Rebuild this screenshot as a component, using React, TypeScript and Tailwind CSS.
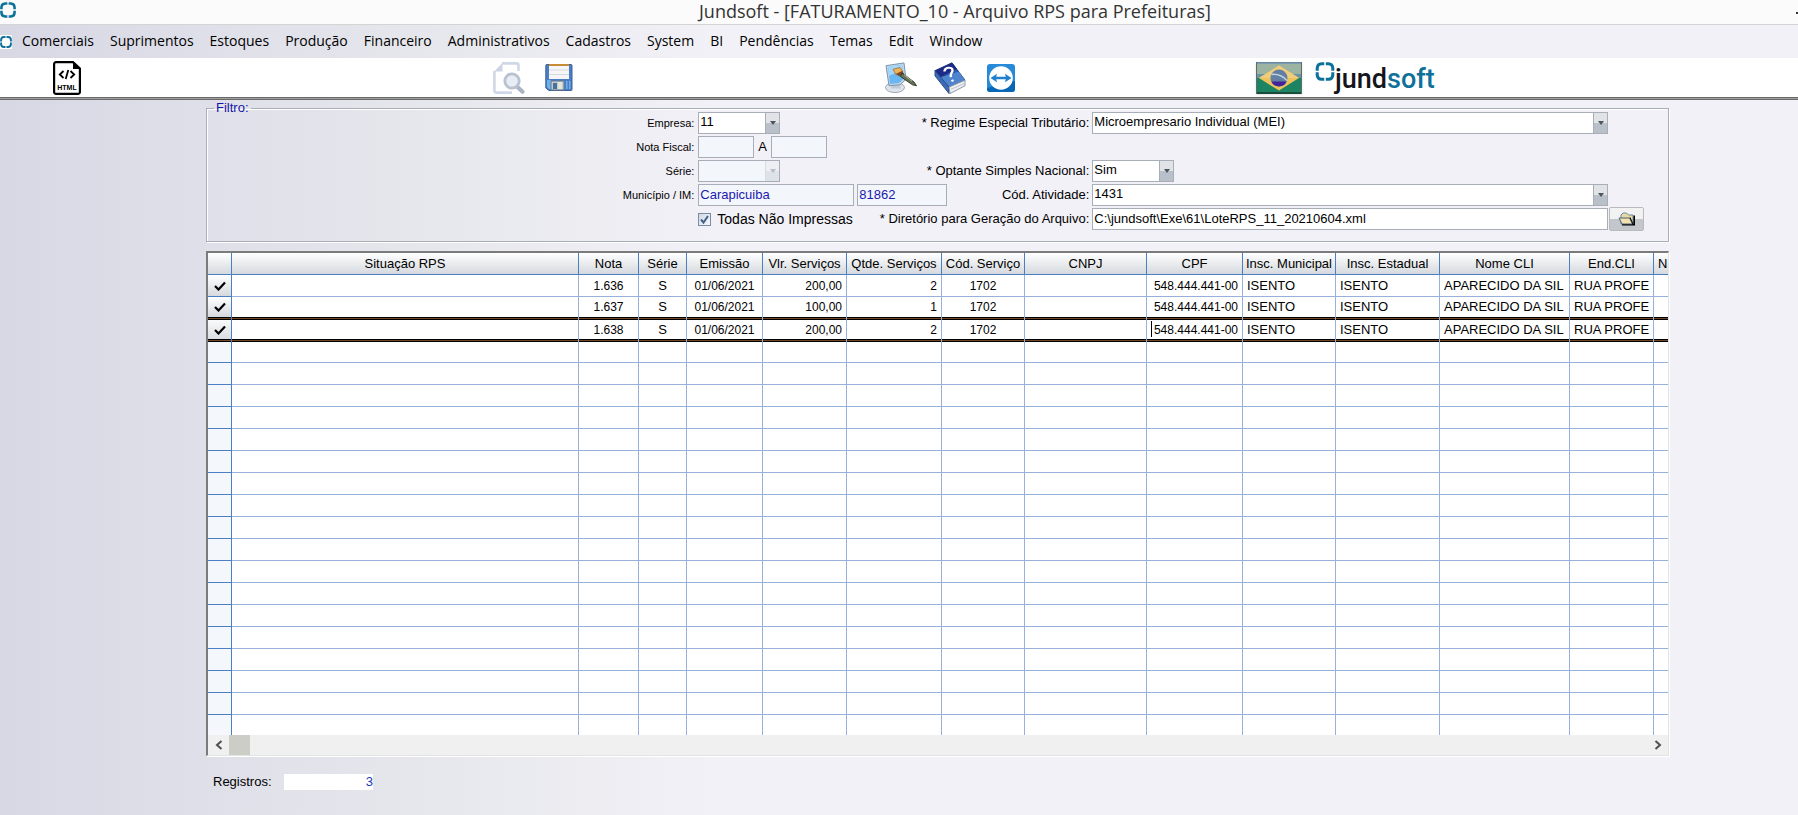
import React from 'react';

const menuItems = [
  'Comerciais', 'Suprimentos', 'Estoques', 'Produção', 'Financeiro', 'Administrativos',
  'Cadastros', 'System', 'BI', 'Pendências', 'Temas', 'Edit', 'Window',
];

interface Rps {
  nota: string;
  valor: string;
  qtde: string;
}

const registros: Rps[] = [
  { nota: '1.636', valor: '200,00', qtde: '2' },
  { nota: '1.637', valor: '100,00', qtde: '1' },
  { nota: '1.638', valor: '200,00', qtde: '2' },
];

const columns = [
  { title: '', width: 'w-[24px]' },
  { title: 'Situação RPS', width: '' },
  { title: 'Nota', width: 'w-[60px]' },
  { title: 'Série', width: 'w-[48px]' },
  { title: 'Emissão', width: 'w-[76px]' },
  { title: 'Vlr. Serviços', width: 'w-[84px]' },
  { title: 'Qtde. Serviços', width: 'w-[95px]' },
  { title: 'Cód. Serviço', width: 'w-[83px]' },
  { title: 'CNPJ', width: 'w-[122px]' },
  { title: 'CPF', width: 'w-[96px]' },
  { title: 'Insc. Municipal', width: 'w-[93px]' },
  { title: 'Insc. Estadual', width: 'w-[104px]' },
  { title: 'Nome CLI', width: 'w-[130px]' },
  { title: 'End.CLI', width: 'w-[84px]' },
  { title: 'N', width: 'w-[14px]' },
];

const emptyRows = Array.from({ length: 18 }, (_, i) => i);

const LogoMark: React.FC<{ className?: string }> = ({ className }) => (
  <svg viewBox="0 0 20 20" className={className} fill="none" stroke="#0d7199" strokeWidth="3.2" aria-hidden="true">
    <path d="M1.800 9.200V6.500Q2 2 6.500 1.800H9.200M10.800 1.800H13.500Q18 2 18.200 6.500V9.200M18.200 10.800V13.500Q18 18 13.500 18.200H10.800M9.200 18.200H6.500Q2 18 1.800 13.500V10.800" />
  </svg>
);

const HtmlIcon = () => (
  <svg viewBox="0 0 28 34" className="w-7 h-[34px]" aria-hidden="true">
    <path d="M3 1.100h17L26.900 7.500v23.400a2 2 0 0 1-2 2H3.100a2 2 0 0 1-2-2V3A1.900 1.900 0 0 1 3 1.100z" fill="#fff" stroke="#000" strokeWidth="2.200" />
    <path d="M20 1v7h7z" fill="#000" />
    <path d="M10.500 10L6.800 13.500l3.700 3.500M17.500 10l3.700 3.500-3.700 3.500M15.300 9l-2.600 9" fill="none" stroke="#000" strokeWidth="1.800" />
    <text x="14" y="28.500" textAnchor="middle" fontSize="7" fontWeight="700" fontFamily="Liberation Sans, sans-serif">HTML</text>
  </svg>
);

const PreviewIcon = () => (
  <svg viewBox="0 0 32 32" className="w-8 h-8" aria-hidden="true">
    <path d="M9 1.400H23.500a2 2 0 0 1 2 2V9M19 30.600H3.400a2 2 0 0 1-2-2V9" fill="none" stroke="#d0d7e7" strokeWidth="2.600" />
    <path d="M9.500 1v8.500H1z" fill="#ccd4e5" />
    <path d="M24.500 25l5 4.800" stroke="#a9b4c4" strokeWidth="4" strokeLinecap="round" />
    <circle cx="19" cy="19" r="7.200" fill="#e8ecf4" stroke="#b9c2cf" strokeWidth="2.800" />
  </svg>
);

const SaveIcon = () => (
  <svg viewBox="0 0 28 28" className="w-7 h-7" aria-hidden="true">
    <path d="M1.500.5h24.500q1 0 1 1v24q0 1-1 1H4L.8 24V1.500q0-1 .7-1z" fill="#4a7fc4" stroke="#3c619b" />
    <rect x="4" y="0" width="20" height="15" fill="#f6f6f8" />
    <rect x="4" y="0" width="20" height="2" fill="#c98c35" />
    <path d="M4 6h20M4 10.500h20" stroke="#d6d9df" />
    <path d="M2 16h4v9H4l-2-2z" fill="#6db0ec" />
    <path d="M21 17h1.500v8H21zM24 17h1.500v8H24z" fill="#6db0ec" />
    <rect x="6" y="17" width="13" height="9" fill="#c2ccd4" stroke="#66798e" />
    <rect x="8" y="19" width="4" height="6" fill="#4a7196" />
    <rect x="13" y="18" width="4" height="7" fill="#e4e6dc" />
  </svg>
);

const ThemeIcon = () => (
  <svg viewBox="0 0 32 34" preserveAspectRatio="none" className="w-8 h-[31px]" aria-hidden="true">
    <ellipse cx="10" cy="28" rx="9.500" ry="5.500" fill="#dfe3ea" stroke="#9aa4b3" />
    <path d="M7 22h7l2 7H6z" fill="#c2cad6" />
    <path d="M1 4l18-3 2 18-6 6-11 1z" fill="#c9d6e2" stroke="#7192b0" />
    <path d="M3 5.500l14-2.500 2 15-5 5-9 1z" fill="#69b6f3" />
    <path d="M3 5.500l14-2.500 1 6-14 6z" fill="#a3d6fb" />
    <path d="M8 8l7-2 3 5-7 3z" fill="#f0b458" stroke="#9a6a2d" strokeWidth=".8" />
    <path d="M11 13l6-3 2 3-5 3z" fill="#7d4e26" />
    <path d="M17 12l12 10 2.500 4-4-1-12-9z" fill="#66725a" stroke="#2c3523" />
    <path d="M19 14l8 7" stroke="#b5c09a" />
  </svg>
);

const HelpIcon = () => (
  <svg viewBox="0 0 32 37" preserveAspectRatio="none" className="w-8 h-8" aria-hidden="true">
    <path d="M1 10L18 1l13 20-16 8z" fill="#285bb0" stroke="#1e2f74" />
    <path d="M1 10L18 1l5 7L6 18z" fill="#1c2b86" />
    <path d="M6 18l19-7 6 10-16 8z" fill="#4d84cd" />
    <path d="M1 10l14 19v7.500L1 16z" fill="#3b6bb8" stroke="#274880" />
    <path d="M15 29l16-8v6.500l-15 9z" fill="#eceef1" stroke="#85909f" />
    <path d="M17 31.500l13-6.500" stroke="#bcc2cb" />
    <path d="M10.500 11c0-5 8-6 8-1.500 0 3-3 4-1.500 8M18 20.500l1 2" fill="none" stroke="#fff" strokeWidth="2.400" />
  </svg>
);

const TeamViewerIcon = () => (
  <svg viewBox="0 0 28 28" className="w-7 h-7" aria-hidden="true">
    <rect width="28" height="28" rx="3" fill="#268ad9" />
    <path d="M28 17v8a3 3 0 0 1-3 3H3a3 3 0 0 1-3-3v-1z" fill="#0767b4" />
    <circle cx="14" cy="14" r="11.800" fill="#fff" />
    <path d="M3.500 14L10 9.800l-.8 2.900h9.600l-.8-2.900 6.500 4.200-6.500 4.200.8-2.900H9.200l.8 2.900z" fill="#1f7fd0" />
  </svg>
);

const BrazilFlag = () => (
  <svg viewBox="0 0 46 32" className="w-[46px] h-8" aria-hidden="true">
    <rect x=".5" y=".5" width="45" height="31" fill="#1c8462" stroke="#5d6d6b" />
    <rect x="1" y="1" width="44" height="12" fill="#9bb3a0" />
    <rect x="1" y="12" width="44" height="4" fill="#6c93a2" />
    <path d="M1 1h44" stroke="#7393b4" strokeWidth="1.500" />
    <path d="M23 3.500l20 12.500L23 28.500 3 16z" fill="#ecc25b" />
    <path d="M23 3.500l20 12.500H3z" fill="#f0cd7c" />
    <circle cx="23" cy="16" r="8.500" fill="#6380a4" />
    <path d="M15.300 19.500a8.500 8.500 0 0 0 15.400 0z" fill="#42239b" />
    <path d="M15.500 12.500c6-.8 11 1.500 15.500 6" fill="none" stroke="#c4d3dc" strokeWidth="1.500" />
    <path d="M1 31h44" stroke="#1c4a3b" strokeWidth="2" />
  </svg>
);

const FolderIcon = () => (
  <svg viewBox="0 0 18 14" className="w-[18px] h-3.5" aria-hidden="true">
    <path d="M3 12V3l2-2h3.500l2 2H15v9z" fill="#e9d7a4" stroke="#6b8ba3" />
    <path d="M16.200 3.500v9.300H4" fill="none" stroke="#000" strokeWidth="1.600" />
    <path d="M1 6h10.500l3 6H4z" fill="#f3e0ae" stroke="#47637c" />
    <path d="M12 5.500l3 6.500" stroke="#000" />
  </svg>
);

interface ComboProps {
  id: string;
  value: string;
  className: string;
  disabled?: boolean;
}

const Combo: React.FC<ComboProps> = ({ id, value, className, disabled }) => (
  <div className={`relative h-[22px] ${className}`}>
    <select
      id={id}
      disabled={disabled}
      defaultValue={value}
      className="block w-full h-full appearance-none border border-[#a8aeb7] bg-white pl-px pb-0.5 leading-4 text-black disabled:bg-[#f3f6fb]"
    >
      <option>{value}</option>
    </select>
    <span
      className={`pointer-events-none absolute right-px top-px bottom-px w-[14px] flex items-center justify-center border-l border-[#a8aeb7] bg-linear-to-b from-[#e2e3e6] from-50% to-[#b9c0c9] to-50% ${disabled ? 'opacity-35' : ''}`}
    >
      <svg viewBox="0 0 6 4" className="w-1.5 h-1" aria-hidden="true">
        <path d="M0 0h6L3 4z" fill="#4d545d" />
      </svg>
    </span>
  </div>
);

const inputClass = 'h-[22px] border border-[#a8aeb7] px-px pb-0.5 leading-4 min-w-0';

interface FilterRowProps {
  label?: string;
  htmlFor?: string;
  left?: React.ReactNode;
  rightLabel?: string;
  rightFor?: string;
  children?: React.ReactNode;
}

const FilterRow: React.FC<FilterRowProps> = ({ label, htmlFor, left, rightLabel, rightFor, children }) => (
  <div className="flex items-center h-[22px]">
    <div className="w-1/3 text-right text-[11px] whitespace-nowrap">
      {label && <label htmlFor={htmlFor}>{label}</label>}
    </div>
    <div className="w-[396px] shrink-0 flex items-center pl-1 pr-px">
      {left}
      {rightLabel && <label htmlFor={rightFor} className="ml-auto whitespace-nowrap">{rightLabel}</label>}
    </div>
    <div className="flex-1 min-w-0 flex items-center pl-0.5">{children}</div>
  </div>
);

const CheckMark = () => (
  <svg viewBox="0 0 12 10" className="w-3 h-2.5" aria-hidden="true">
    <path d="M1 5l3.500 3.500L11 1.500" fill="none" stroke="#000" strokeWidth="2.200" />
  </svg>
);

const gridLine = 'border-r border-b border-[#97b1da]';
const headLine = 'border-r border-b border-[#4a80c1]';

const RpsTable = () => {
  const current = registros.length - 1;

  return (
    <table className="w-full table-fixed border-separate border-spacing-0 bg-white text-[13px] leading-4">
      <colgroup>
        {columns.map((col, i) => <col key={i} className={col.width} />)}
      </colgroup>
      <thead>
        <tr className="h-[22px]">
          {columns.map((col, i) => (
            <th
              key={i}
              className={`${headLine} p-0 overflow-hidden whitespace-nowrap font-normal bg-linear-to-b from-white to-[#d5d9de] ${i === columns.length - 1 ? 'pl-1 border-r-0 text-left' : 'text-center'}`}
            >
              {col.title}
            </th>
          ))}
        </tr>
      </thead>
      <tbody>
        {registros.map((r, i) => {
          const band = i === current
            ? 'border-b-0 shadow-[inset_0_1px_#000,inset_0_2px_#6e4a2a,inset_0_3px_#000,inset_0_-1px_#000,inset_0_-2px_#6e4a2a,inset_0_-3px_#000]'
            : i === current - 1 ? 'border-b-0' : '';
          const cell = `${gridLine} ${band} p-0 px-1 overflow-hidden whitespace-nowrap`;
          const height = i === current ? 'h-[25px]' : i === current - 1 ? 'h-5' : 'h-[22px]';
          return (
            <tr key={r.nota} className={height}>
              <td className={`${headLine} ${band} p-0 bg-linear-to-b from-white to-[#d5d9de]`}>
                <span className="flex justify-center"><CheckMark /></span>
              </td>
              <td className={cell}></td>
              <td className={`${cell} text-center text-[12px]`}>{r.nota}</td>
              <td className={`${cell} text-center`}>S</td>
              <td className={`${cell} text-center text-[12px]`}>01/06/2021</td>
              <td className={`${cell} text-right text-[12px]`}>{r.valor}</td>
              <td className={`${cell} text-right text-[12px]`}>{r.qtde}</td>
              <td className={`${cell} text-center text-[12px]`}>1702</td>
              <td className={cell}></td>
              <td className={`${cell} relative text-right text-[12px]`}>
                {i === current && <span className="absolute left-1 top-1 h-4 w-px bg-black" />}
                548.444.441-00
              </td>
              <td className={cell}>ISENTO</td>
              <td className={cell}>ISENTO</td>
              <td className={cell}>APARECIDO DA SIL</td>
              <td className={cell}>RUA PROFE</td>
              <td className={`${cell} border-r-0`}></td>
            </tr>
          );
        })}
        {emptyRows.map(row => {
          const last = row === emptyRows.length - 1;
          const height = row === 0 ? 'h-[21px]' : last ? 'h-5' : 'h-[22px]';
          return (
            <tr key={row} className={height}>
              {columns.map((_, i) => (
                <td
                  key={i}
                  className={`p-0 ${i === 0 ? `${headLine} bg-[#f4f7fc]` : gridLine} ${i === columns.length - 1 ? 'border-r-0' : ''} ${last ? 'border-b-0' : ''}`}
                ></td>
              ))}
            </tr>
          );
        })}
      </tbody>
    </table>
  );
};

export default function App() {
  return (
    <div className="min-h-screen flex flex-col overflow-x-hidden bg-[#f2f1f7] bg-linear-to-r from-[#d8d8e5] from-0% via-[#e7e8ed] via-25% to-[#f2f1f7] to-40% font-['Liberation_Sans',Arial,sans-serif] text-[13px] leading-4 text-black">
      <header className="relative h-[25px] flex items-center justify-center border-b border-[#d4d4d4] bg-[#fbfbfb]">
        <span className="absolute left-0 top-0.5"><LogoMark className="w-4 h-4" /></span>
        <h1 className="pb-0.5 pl-28 text-[18px] leading-[22px] text-[#333] whitespace-nowrap font-['Open_Sans','Noto_Sans',sans-serif]">
          Jundsoft - [FATURAMENTO_10 - Arquivo RPS para Prefeituras]
        </h1>
        <button aria-label="Minimizar" className="absolute right-0 top-3 w-0.5 h-0.5 bg-[#333]"></button>
      </header>

      <nav className="h-[33px] flex items-center gap-4 text-[14px] leading-5 font-['Open_Sans','Noto_Sans',sans-serif]">
        <span className="-mr-1.5 w-3 h-3.5 overflow-hidden bg-white flex justify-end items-center">
          <LogoMark className="w-3 h-3 shrink-0" />
        </span>
        {menuItems.map(item => (
          <a key={item} href="#" className="pb-0.5 whitespace-nowrap">{item}</a>
        ))}
      </nav>

      <div className="h-[39px] flex items-center bg-white">
        <button aria-label="HTML" className="ml-[53px]"><HtmlIcon /></button>
        <button aria-label="Visualizar" className="ml-[412px]"><PreviewIcon /></button>
        <button aria-label="Salvar" className="ml-5"><SaveIcon /></button>
        <button aria-label="Temas" className="ml-[312px]"><ThemeIcon /></button>
        <button aria-label="Ajuda" className="ml-[17px]"><HelpIcon /></button>
        <button aria-label="TeamViewer" className="ml-[21px]"><TeamViewerIcon /></button>
        <button aria-label="Idioma" className="ml-[241px] shadow"><BrazilFlag /></button>
        <div className="ml-[13px] h-8 flex items-start">
          <LogoMark className="w-5 h-[19px]" />
          <span className="text-[27px] leading-8 pt-px font-medium font-['Roboto',sans-serif] text-[#14161c]">
            jund<span className="text-[#0d7199]">soft</span>
          </span>
        </div>
      </div>
      <div className="h-[3px] border-y border-[#696969] bg-[#a0a0a0]"></div>

      <main className="flex-1 pl-[206px] pr-[129px]">
        <fieldset className="h-[142px] border border-[#a8aeb7] shadow-[inset_1px_1px_#fff,1px_1px_#fff] min-w-0 px-px">
          <legend className="ml-1.5 px-0.5 text-[#1616a5]">Filtro:</legend>
          <div className="-mt-1 flex flex-col gap-0.5">
            <FilterRow
              label="Empresa:"
              htmlFor="empresa"
              left={<Combo id="empresa" value="11" className="w-[82px]" />}
              rightLabel="* Regime Especial Tributário:"
              rightFor="regime"
            >
              <Combo id="regime" value="Microempresario Individual (MEI)" className="w-[516px]" />
            </FilterRow>
            <FilterRow
              label="Nota Fiscal:"
              htmlFor="nota-de"
              left={
                <>
                  <input id="nota-de" className={`${inputClass} w-14 bg-[#f3f6fb]`} />
                  <label htmlFor="nota-ate" className="px-1">A</label>
                  <input id="nota-ate" className={`${inputClass} w-14 bg-[#f3f6fb]`} />
                </>
              }
            />
            <FilterRow
              label="Série:"
              htmlFor="serie"
              left={<Combo id="serie" value="" className="w-[82px]" disabled />}
              rightLabel="* Optante Simples Nacional:"
              rightFor="optante"
            >
              <Combo id="optante" value="Sim" className="w-[82px]" />
            </FilterRow>
            <FilterRow
              label="Município / IM:"
              htmlFor="municipio"
              left={
                <>
                  <input id="municipio" defaultValue="Carapicuiba" className={`${inputClass} w-[156px] bg-[#f3f6fb] text-[#1a1ab0]`} />
                  <input aria-label="Inscrição Municipal" defaultValue="81862" className={`${inputClass} ml-[3px] w-[90px] bg-[#f3f6fb] text-[#1a1ab0]`} />
                </>
              }
              rightLabel="Cód. Atividade:"
              rightFor="atividade"
            >
              <Combo id="atividade" value="1431" className="w-[516px]" />
            </FilterRow>
            <FilterRow
              left={
                <label className="flex items-center gap-1.5 text-[14px] whitespace-nowrap">
                  <input
                    type="checkbox"
                    defaultChecked
                    className="peer appearance-none w-[13px] h-[13px] border border-[#7a8ba3] bg-[#e4e9f0] checked:bg-[linear-gradient(135deg,#cfd8e4,#f7f9fc)]"
                  />
                  <svg viewBox="0 0 13 13" className="hidden peer-checked:block -ml-[19px] w-[13px] h-[13px] pointer-events-none" aria-hidden="true">
                    <path d="M3 6.500l2.500 3L10 3" fill="none" stroke="#456287" strokeWidth="2" />
                  </svg>
                  Todas Não Impressas
                </label>
              }
              rightLabel="* Diretório para Geração do Arquivo:"
              rightFor="diretorio"
            >
              <input id="diretorio" defaultValue="C:\jundsoft\Exe\61\LoteRPS_11_20210604.xml" className={`${inputClass} w-[516px] bg-white`} />
              <button
                aria-label="Procurar"
                className="ml-px w-[35px] h-6 shrink-0 flex items-center justify-center rounded-xs border border-[#b9babc] bg-linear-to-b from-[#f2f2f3] from-50% to-[#c3c7cb] to-50%"
              >
                <FolderIcon />
              </button>
            </FilterRow>
          </div>
        </fieldset>

        <section className="mt-[9px] border-t-2 border-l-2 border-[#7b7b7b] border-r border-b border-r-[#e3e3e3] border-b-[#e3e3e3] shadow-[1px_1px_#fff]">
          <RpsTable />
          <div className="h-5 flex items-center bg-[#f0f0f0]">
            <button aria-label="Rolar para a esquerda" className="w-[21px] h-5 flex items-center justify-center">
              <svg viewBox="0 0 8 10" className="w-2 h-2.5" aria-hidden="true"><path d="M6.500 1L2 5l4.500 4" fill="none" stroke="#505050" strokeWidth="2" /></svg>
            </button>
            <div className="w-[21px] h-5 bg-[#cdcdc8]"></div>
            <button aria-label="Rolar para a direita" className="ml-auto w-[21px] h-5 flex items-center justify-center">
              <svg viewBox="0 0 8 10" className="w-2 h-2.5" aria-hidden="true"><path d="M1.500 1L6 5 1.500 9" fill="none" stroke="#505050" strokeWidth="2" /></svg>
            </button>
          </div>
        </section>

        <div className="flex items-center mt-[18px] pl-[7px]">
          <label htmlFor="registros" className="w-[71px]">Registros:</label>
          <input id="registros" readOnly value="3" className="w-[89px] h-4 bg-white text-right text-[#1a3ab8] leading-4" />
        </div>
      </main>
    </div>
  );
}
